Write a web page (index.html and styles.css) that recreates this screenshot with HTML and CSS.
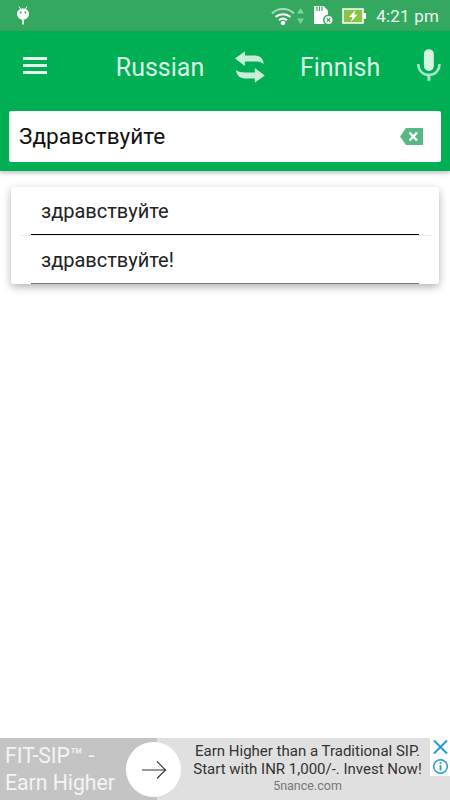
FILE: index.html
```html
<!DOCTYPE HTML>
<html lang="ru">

<head>
  <meta charset="utf-8" />
  <meta name="viewport" content="width=device-width,initial-scale=1.0" />
  <title>Translator</title>
  <link rel="stylesheet" href="styles.css">
</head>

<body>
  <div id="screen">
    <div id="statusBar">
      <svg class="android" width="14" height="22" viewBox="0 0 14 22">
        <path d="M3 1.500 4.800 4.500M11 1.500 9.200 4.500" stroke="#fff" stroke-width="1" fill="none" />
        <path d="M7 3.500c-3.400 0-6 2.300-6 5.200 0 3 2.600 6 6 6s6-3 6-6c0-2.900-2.600-5.200-6-5.200z" fill="#fff" />
        <circle cx="4.600" cy="7.500" r="1" fill="#35a85f" />
        <circle cx="9.400" cy="7.500" r="1" fill="#35a85f" />
        <rect x="6.200" y="14" width="1.600" height="5.500" fill="#fff" />
      </svg>
      <div class="statusRight">
        <svg class="wifi" width="26" height="20" viewBox="0 0 26 20">
          <path d="M1 7.500C7 1.500 17 1.500 23 7.500" stroke="#a5dcb9" stroke-width="2" fill="none" />
          <path d="M4.500 11C8.500 7.200 15.500 7.200 19.500 11" stroke="#fff" stroke-width="2" fill="none" />
          <path d="M8 14.200C10.500 12.200 13.500 12.200 16 14.200" stroke="#fff" stroke-width="2" fill="none" />
          <circle cx="12" cy="17" r="2.300" fill="#fff" />
        </svg>
        <svg class="arrows" width="7" height="16" viewBox="0 0 7 16">
          <path d="M3.500 0 7 5.500H0zM3.500 16 0 10.500H7z" fill="#86cfa0" />
        </svg>
        <svg class="sdcard" width="22" height="21" viewBox="0 0 22 21">
          <path d="M1 1H10.500L15 5.500V19H1z" fill="#fff" />
          <path d="M4 1.500V6M6.500 1.500V6M9 1.500V6" stroke="#35a85f" stroke-width="1.200" />
          <circle cx="15.500" cy="15" r="5.500" fill="#35a85f" />
          <circle cx="15.500" cy="15" r="4" fill="#e9f6ee" />
          <path d="M13.800 13.300 17.200 16.700M17.200 13.300 13.800 16.700" stroke="#35a85f" stroke-width="1.200" />
        </svg>
        <svg class="battery" width="25" height="16" viewBox="0 0 25 16">
          <rect x="1" y="1" width="20" height="14" fill="#8bc34a" stroke="#fff" stroke-width="1.500" />
          <rect x="21.500" y="5" width="2.500" height="6" fill="#fff" />
          <path d="M13.500 2 7 9H10.500L9 14 15.500 6.500H12z" fill="#fff" />
        </svg>
        <span class="clock">4:21 pm</span>
      </div>
    </div>

    <div id="header">
      <div class="toolbar">
        <div class="menu"><span></span><span></span><span></span></div>
        <span class="lang langFrom">Russian</span>
        <svg class="swap" width="30" height="32" viewBox="0 0 30 32">
          <path d="M0 7.500 10 0V4.500H20C25 4.500 28.500 7.500 29 13 26.500 11 24 10.500 20 10.500H10V15z" fill="#c9eed8" />
          <path d="M30 24.500 20 32V27.500H10C5 27.500 1.500 24.500 1 19 3.500 21 6 21.500 10 21.500H20V17z" fill="#c9eed8" />
        </svg>
        <span class="lang langTo">Finnish</span>
        <svg class="mic" width="24" height="32" viewBox="0 0 24 32">
          <rect x="7" y="0" width="10" height="22" rx="5" fill="#d5f3e1" />
          <path d="M1.300 15C1.300 22 6 26 12 26S22.700 22 22.700 15" stroke="#a5e6c2" stroke-width="2.500" fill="none" />
          <rect x="10.500" y="25" width="3" height="7" fill="#a5e6c2" />
        </svg>
      </div>
      <div class="searchBox">
        <span class="searchText">Здравствуйте</span>
        <svg class="clear" width="23" height="17" viewBox="0 0 23 17">
          <path d="M6 0H23V17H6L0 8.500z" fill="#57b884" />
          <path d="M9.500 4.500 17 12.500M17 4.500 9.500 12.500" stroke="#fff" stroke-width="2.400" />
        </svg>
      </div>
    </div>

    <ul id="suggestions">
      <li><div>здравствуйте</div></li>
      <li><div>здравствуйте!</div></li>
    </ul>

    <div id="adBanner">
      <div class="adLeft">
        <span class="adTitle">FIT-SIP™ -<br>Earn Higher</span>
        <div class="adArrow">
          <svg width="26" height="20" viewBox="0 0 26 20">
            <path d="M1 10H24.500M16 1.500 24.500 10 16 18.500" stroke="#333" stroke-width="1.100" fill="none" />
          </svg>
        </div>
      </div>
      <div class="adBody">
        <div class="adLine">Earn Higher than a Traditional SIP.</div>
        <div class="adLine">Start with INR 1,000/-. Invest Now!</div>
        <div class="adSite">5nance.com</div>
      </div>
      <div class="adChoices">
        <svg width="19" height="19" viewBox="0 0 19 19">
          <path d="M3 2.500 16 15.500M16 2.500 3 15.500" stroke="#1e9fd6" stroke-width="2" />
        </svg>
        <svg class="adInfo" width="17" height="17" viewBox="0 0 17 17">
          <circle cx="8.500" cy="8.500" r="6.800" stroke="#1e9fd6" stroke-width="1.500" fill="none" />
          <rect x="7.600" y="7.200" width="1.800" height="5.300" fill="#1e9fd6" />
          <rect x="7.600" y="4.300" width="1.800" height="1.800" fill="#1e9fd6" />
        </svg>
      </div>
    </div>
  </div>
</body>

</html>
```

FILE: styles.css
```css
* {
  box-sizing: border-box;
}

body {
  margin: 0px;
  font-family: Roboto, "Liberation Sans", sans-serif;
}

#screen {
  width: 450px;
  height: 800px;
  display: flex;
  flex-direction: column;
  background: #fff;
  overflow: hidden;
}

#statusBar {
  height: 31px;
  flex: none;
  display: flex;
  align-items: center;
  justify-content: space-between;
  padding: 0 11px 0 16px;
  background: #35a85f;
}

.statusRight {
  display: flex;
  align-items: center;
}

.wifi {
  margin-right: 0px;
}

.arrows {
  margin-right: 9px;
}

.sdcard {
  margin-right: 7px;
}

.battery {
  margin-right: 9px;
}

.clock {
  font-size: 17px;
  color: #eef8f2;
  letter-spacing: 0.2px;
}

#header {
  flex: none;
  height: 140px;
  padding: 0 9px;
  background: #00ae53;
  box-shadow: 0 2px 4px rgba(0, 0, 0, .25);
}

.toolbar {
  height: 80px;
  padding-bottom: 8px;
  display: flex;
  align-items: center;
  color: #dcf6e8;
}

.menu {
  width: 24px;
  margin: 0 0 3px 14px;
  display: flex;
  flex-direction: column;
  gap: 4px;
}

.menu span {
  height: 3px;
  background: #e6f8ee;
}

.lang {
  font-size: 25px;
}

.langFrom {
  margin-left: 69px;
}

.swap {
  margin-left: 31px;
}

.langTo {
  margin-left: 35px;
}

.mic {
  margin: 0 0 4px 37px;
}

.searchBox {
  height: 51px;
  display: flex;
  align-items: center;
  justify-content: space-between;
  padding: 0 18px 0 10px;
  background: #fff;
  border-radius: 2px;
}

.searchText {
  font-size: 22.6px;
  color: #111;
}

#suggestions {
  list-style: none;
  margin: 16px 11px 0;
  padding: 0;
  background: #fff;
  border-radius: 3px;
  box-shadow: 0 3px 9px rgba(0, 0, 0, .3);
}

#suggestions li {
  margin: 0 7px 0 9px;
}

#suggestions li:first-child {
  border-bottom: 1px solid #ececec;
}

#suggestions li div {
  height: 48px;
  width: 388px;
  margin-left: 11px;
  padding: 12px 0 0 10px;
  font-size: 20px;
  color: #222;
  border-bottom: 1px solid #000;
}

#suggestions li + li div {
  border-bottom-color: #777;
}

#adBanner {
  margin-top: auto;
  height: 62px;
  flex: none;
  display: flex;
  background: #e0e0e0;
}

.adLeft {
  width: 157px;
  flex: none;
  position: relative;
  padding: 4px 0 0 5px;
  background: #c4c4c4;
}

.adTitle {
  display: block;
  font-size: 21.2px;
  line-height: 27px;
  color: #f4f4f4;
}

.adArrow {
  position: absolute;
  left: 126px;
  top: 4px;
  width: 55px;
  height: 55px;
  display: flex;
  align-items: center;
  justify-content: center;
  border-radius: 50%;
  background: #fff;
}

.adBody {
  flex: 1;
  padding: 5px 0 0 28px;
  text-align: center;
  color: #333;
}

.adLine {
  font-size: 15px;
  line-height: 17.5px;
  white-space: nowrap;
}

.adSite {
  font-size: 12.5px;
  line-height: 16px;
  color: #777;
}

.adChoices {
  width: 20px;
  height: 38px;
  flex: none;
  display: flex;
  flex-direction: column;
  align-items: center;
  background: #fff;
}

.adInfo {
  margin-top: 1px;
}
```
